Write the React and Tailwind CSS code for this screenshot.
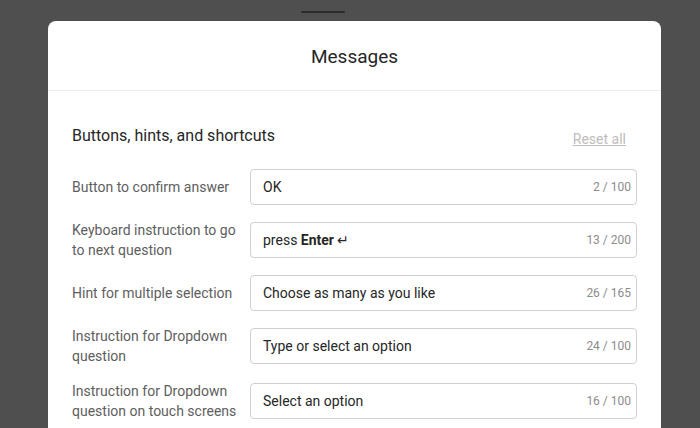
import React from 'react';

const rows = [
  { label: 'Button to confirm answer', value: 'OK', count: '2 / 100' },
  {
    label: 'Keyboard instruction to go to next question',
    value: (
      <>
        press <span className="font-bold">Enter</span> ↵
      </>
    ),
    count: '13 / 200',
  },
  { label: 'Hint for multiple selection', value: 'Choose as many as you like', count: '26 / 165' },
  { label: 'Instruction for Dropdown question', value: 'Type or select an option', count: '24 / 100' },
  {
    label: 'Instruction for Dropdown question on touch screens',
    value: 'Select an option',
    count: '16 / 100',
  },
];

const MessageRow = ({ label, value, count }) => (
  <div className="flex items-center gap-3">
    <label className="w-[166px] shrink-0 text-[14px] leading-[20px] text-[#5e5e5e]">{label}</label>
    <div className="flex h-9 flex-1 items-center justify-between rounded-[4px] border border-[#d0d0d0] pl-3 pr-[5px]">
      <span className="text-[14px] text-[#262626]">{value}</span>
      <span className="text-[12px] text-[#8c8c8c]">{count}</span>
    </div>
  </div>
);

const App = () => {
  return (
    <div
      className="h-[428px] w-[700px] overflow-hidden bg-[#4f4f4f]"
      style={{ fontFamily: 'Roboto, "Liberation Sans", sans-serif' }}
    >
      {/* Sheet handle */}
      <div className="flex justify-center pt-[11px]">
        <div className="ml-[-54px] h-[2px] w-[44px] rounded-full bg-[#2c2c2c]" />
      </div>

      {/* Modal */}
      <div className="ml-[48px] mt-[8px] w-[613px] rounded-t-[8px] bg-white pb-10">
        <div className="flex h-[70px] items-center justify-center border-b border-[#ececec] pt-[3px]">
          <h1 className="text-[19px] text-[#262626]">Messages</h1>
        </div>

        <div className="px-6 pt-[30px]">
          <div className="flex items-center justify-between">
            <h2 className="text-[16px] text-[#262626]">Buttons, hints, and shortcuts</h2>
            <button className="mr-[11px] mt-[8px] text-[14px] text-[#bdbdbd] underline">Reset all</button>
          </div>

          <div className="mt-[19px] flex flex-col gap-[15px]">
            {rows.map((row) => (
              <MessageRow key={row.count} {...row} />
            ))}
          </div>
        </div>
      </div>
    </div>
  );
};

export default App;
